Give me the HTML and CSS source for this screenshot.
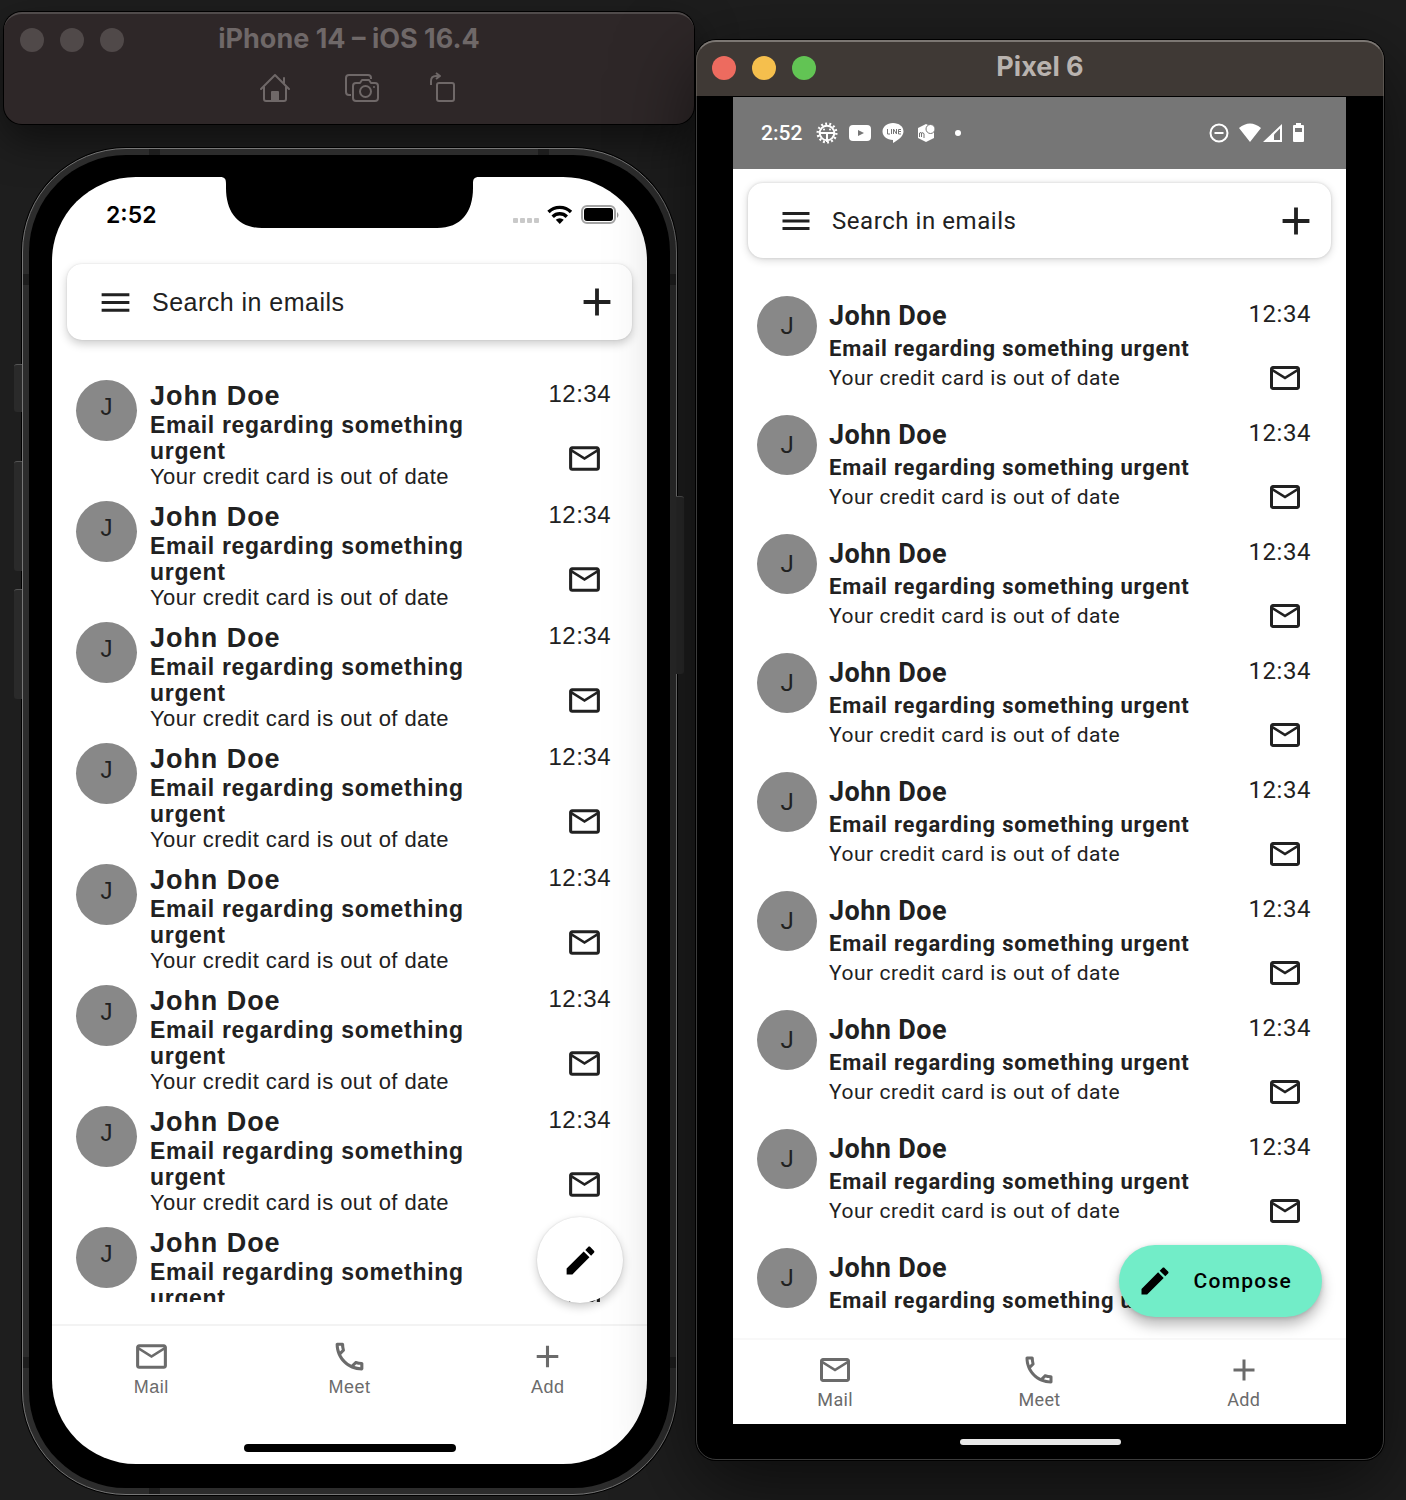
FILE: index.html
```html
<!DOCTYPE html>
<html lang="en">
<head>
<meta charset="utf-8">
<meta name="viewport" content="width=device-width, initial-scale=1">
<title>Mail on iPhone 14 and Pixel 6</title>
<link rel="stylesheet" href="styles.css">
</head>
<body>
<svg class="sprite" aria-hidden="true">
  <symbol id="menu" viewBox="0 0 24 24"><path d="M3 6h18v2H3zM3 11h18v2H3zM3 16h18v2H3z"/></symbol>
  <symbol id="plus" viewBox="0 0 24 24"><path d="M19 13h-6v6h-2v-6H5v-2h6V5h2v6h6z"/></symbol>
  <symbol id="mail" viewBox="0 0 24 24"><path d="M22 6C22 4.9 21.1 4 20 4H4C2.9 4 2 4.9 2 6V18C2 19.1 2.9 20 4 20H20C21.1 20 22 19.1 22 18V6M20 6L12 11L4 6H20M20 18H4V8L12 13L20 8V18Z"/></symbol>
  <symbol id="phone" viewBox="0 0 24 24"><path d="M20,15.5C18.8,15.5 17.5,15.3 16.4,14.9C16.3,14.9 16.2,14.9 16.1,14.9C15.8,14.9 15.6,15 15.4,15.2L13.2,17.4C10.4,15.9 8,13.6 6.6,10.8L8.8,8.6C9.1,8.3 9.2,7.9 9,7.6C8.7,6.5 8.5,5.2 8.5,4C8.5,3.5 8,3 7.5,3H4C3.5,3 3,3.5 3,4C3,13.4 10.6,21 20,21C20.5,21 21,20.5 21,20V16.5C21,16 20.5,15.5 20,15.5M5,5H6.5C6.6,5.9 6.8,6.8 7,7.6L5.8,8.8C5.4,7.6 5.1,6.3 5,5M19,19C17.7,18.9 16.4,18.6 15.2,18.2L16.4,17C17.2,17.2 18.1,17.4 19,17.4V19Z"/></symbol>
  <symbol id="pencil" viewBox="0 0 24 24"><path d="M20.71,7.04C21.1,6.65 21.1,6 20.71,5.63L18.37,3.29C18,2.9 17.35,2.9 16.96,3.29L15.12,5.12L18.87,8.87M3,17.25V21H6.75L17.81,9.93L14.06,6.18L3,17.25Z"/></symbol>
</svg>

<main class="desktop">
  <section class="simulator" aria-label="iPhone 14 simulator">
    <header class="toolbar">
      <div class="titlebar">
        <div class="lights"><i></i><i></i><i></i></div>
        <h1 class="title">iPhone 14 – iOS 16.4</h1>
      </div>
      <div class="tools">
        <button class="tool tool-home" aria-label="Home">
          <svg width="32" height="30" viewBox="0 0 32 30" fill="none" stroke="currentColor" stroke-width="2" stroke-linecap="round" stroke-linejoin="round"><path d="M2 16L16 2l14 14M5 14v12q0 2 2 2h18q2 0 2-2V14M25 10V5"/><path d="M13 28v-9h6v9z" fill="currentColor"/></svg>
        </button>
        <button class="tool tool-shot" aria-label="Screenshot">
          <svg width="36" height="30" viewBox="0 0 36 30" fill="none" stroke="currentColor" stroke-width="2" stroke-linejoin="round"><path d="M7 22H5q-3 0-3-3V5q0-3 3-3h19q3 0 3 3v1"/><path d="M12 10h4l2-3h7l2 3h4q3 0 3 3v12q0 3-3 3H12q-3 0-3-3V13q0-3 3-3z"/><circle cx="21.500" cy="18.500" r="5.500"/><circle cx="30" cy="14" r="1" fill="currentColor" stroke="none"/></svg>
        </button>
        <button class="tool tool-rotate" aria-label="Rotate">
          <svg width="28" height="32" viewBox="0 0 28 32" fill="none" stroke="currentColor" stroke-width="2" stroke-linejoin="round"><rect x="8" y="11" width="17" height="18" rx="2"/><path d="M2 13V9q0-5 5-5h3M7 1l4 3-4 3"/></svg>
        </button>
      </div>
    </header>

    <div class="iphone">
      <i class="key key-mute"></i><i class="key key-up"></i><i class="key key-down"></i><i class="key key-power"></i>
      <i class="band band-top-left"></i><i class="band band-top-right"></i><i class="band band-bottom-left"></i>
      <i class="band band-left-upper"></i><i class="band band-left-lower"></i><i class="band band-right-upper"></i><i class="band band-right-lower"></i>
      <div class="bezel">
        <div class="screen ios">
          <svg class="notch" width="259" height="52" viewBox="0 0 259 52" aria-hidden="true"><path d="M0 0C5 0 6 2 6 7v4c0 24 12 40 36 40h175c24 0 36-16 36-40V7c0-5 1-7 6-7z"/></svg>
          <div class="status">
            <span class="clock">2:52</span>
            <svg width="108" height="24" viewBox="0 0 108 24" aria-hidden="true"><g fill="#c9c9c9"><rect x="1" y="15" width="5" height="5" rx="1"/><rect x="8" y="15" width="5" height="5" rx="1"/><rect x="15" y="15" width="5" height="5" rx="1"/><rect x="22" y="15" width="5" height="5" rx="1"/></g><g fill="none" stroke="#000" stroke-width="3.400"><path d="M36.500 9a16 16 0 0 1 22.500 0"/><path d="M40.700 13.700a10 10 0 0 1 14.100 0"/></g><path d="M47.750 21l-4-4.300a6 6 0 0 1 8 0z"/><rect x="70" y="3" width="33" height="17" rx="5" fill="none" stroke="#a3a3a3" stroke-width="2"/><rect x="72" y="5" width="29" height="13" rx="3"/><path d="M105 9q3 3 0 6z" fill="#999"/></svg>
          </div>
          <form class="search">
            <button class="icon-btn" type="button" aria-label="Menu"><svg class="icon"><use href="#menu"/></svg></button>
            <input class="field" type="text" aria-label="Search in emails" placeholder="Search in emails">
            <button class="icon-btn" type="button" aria-label="New"><svg class="icon icon-plus"><use href="#plus"/></svg></button>
          </form>
          <ul class="mails">
            <li class="row"><span class="avatar">J</span><div class="text"><h2 class="name">John Doe</h2><p class="subject">Email regarding something urgent</p><p class="body">Your credit card is out of date</p></div><div class="side"><time class="time">12:34</time><svg class="icon"><use href="#mail"/></svg></div></li>
            <li class="row"><span class="avatar">J</span><div class="text"><h2 class="name">John Doe</h2><p class="subject">Email regarding something urgent</p><p class="body">Your credit card is out of date</p></div><div class="side"><time class="time">12:34</time><svg class="icon"><use href="#mail"/></svg></div></li>
            <li class="row"><span class="avatar">J</span><div class="text"><h2 class="name">John Doe</h2><p class="subject">Email regarding something urgent</p><p class="body">Your credit card is out of date</p></div><div class="side"><time class="time">12:34</time><svg class="icon"><use href="#mail"/></svg></div></li>
            <li class="row"><span class="avatar">J</span><div class="text"><h2 class="name">John Doe</h2><p class="subject">Email regarding something urgent</p><p class="body">Your credit card is out of date</p></div><div class="side"><time class="time">12:34</time><svg class="icon"><use href="#mail"/></svg></div></li>
            <li class="row"><span class="avatar">J</span><div class="text"><h2 class="name">John Doe</h2><p class="subject">Email regarding something urgent</p><p class="body">Your credit card is out of date</p></div><div class="side"><time class="time">12:34</time><svg class="icon"><use href="#mail"/></svg></div></li>
            <li class="row"><span class="avatar">J</span><div class="text"><h2 class="name">John Doe</h2><p class="subject">Email regarding something urgent</p><p class="body">Your credit card is out of date</p></div><div class="side"><time class="time">12:34</time><svg class="icon"><use href="#mail"/></svg></div></li>
            <li class="row"><span class="avatar">J</span><div class="text"><h2 class="name">John Doe</h2><p class="subject">Email regarding something urgent</p><p class="body">Your credit card is out of date</p></div><div class="side"><time class="time">12:34</time><svg class="icon"><use href="#mail"/></svg></div></li>
            <li class="row"><span class="avatar">J</span><div class="text"><h2 class="name">John Doe</h2><p class="subject">Email regarding something urgent</p></div><div class="side"><time class="time">12:34</time><svg class="icon"><use href="#mail"/></svg></div></li>
          </ul>
          <button class="fab fab-round" aria-label="Compose"><svg class="icon"><use href="#pencil"/></svg></button>
          <nav class="tabs">
            <a class="tab" href="#mail"><svg class="icon"><use href="#mail"/></svg>Mail</a>
            <a class="tab" href="#meet"><svg class="icon"><use href="#phone"/></svg>Meet</a>
            <a class="tab" href="#add"><svg class="icon"><use href="#plus"/></svg>Add</a>
          </nav>
          <div class="home-bar"></div>
        </div>
      </div>
    </div>
  </section>

  <section class="emulator" aria-label="Pixel 6 emulator">
    <header class="titlebar titlebar-active">
      <div class="lights"><i class="red"></i><i class="yellow"></i><i class="green"></i></div>
      <h1 class="title">Pixel 6</h1>
    </header>
    <div class="screen android">
      <div class="status">
        <span class="clock">2:52</span>
        <svg class="notices" width="150" height="24" viewBox="0 0 150 24" fill="#fff" aria-hidden="true"><circle cx="12" cy="12" r="9.300" fill="none" stroke="#fff" stroke-width="2.400" stroke-dasharray="1.900 2.270"/><circle cx="12" cy="12" r="7.300" fill="none" stroke="#fff" stroke-width="2"/><path d="M4 11h16v2H4zM11 12h2v9h-2z"/><circle cx="9" cy="8.500" r="1"/><circle cx="15" cy="8.500" r="1"/><path fill-rule="evenodd" d="M38 4h14q4 0 4 4v8q0 4-4 4H38q-4 0-4-4V8q0-4 4-4zm5 5v6l6-3z"/><path d="M78 2c6 0 10.500 3.500 10.500 8.500 0 5-6 9-10.500 11.500v-3c-6 0-10.500-4-10.500-8.500S72 2 78 2z"/><g fill="none" stroke="#767676"><path d="M72.500 8v5h2.500M76.500 8v5M78.500 13V8l3 5V8M86 8.500h-2.500v4.500H86M83.500 10.500H86"/></g><path d="M103 7l8-4 8 4v10l-8 4-8-4z"/><circle cx="115.500" cy="8" r="4.500" stroke="#767676"/><path d="M104.500 16v-4q2-1 2 0v4m0-4q2-1 2.500 1v4" fill="none" stroke="#767676"/><circle cx="143" cy="12" r="3"/></svg>
        <svg class="signals" width="100" height="24" viewBox="0 0 100 24" fill="#fff" aria-hidden="true"><circle cx="12" cy="12" r="8.500" fill="none" stroke="#fff" stroke-width="2"/><path d="M7.500 11h9v2h-9zM32 7q11-9 22 0L43 21zM56 21L75 3v18z"/><path d="M67 13.500l6-6V19h-6z" fill="#767676"/><path fill-rule="evenodd" d="M87 4h2V2h5v2h2q1 0 1 1v15q0 1-1 1h-9q-1 0-1-1V5q0-1 1-1zm1 3v4h7V7z"/></svg>
      </div>
      <form class="search">
        <button class="icon-btn" type="button" aria-label="Menu"><svg class="icon"><use href="#menu"/></svg></button>
        <input class="field" type="text" aria-label="Search in emails" placeholder="Search in emails">
        <button class="icon-btn" type="button" aria-label="New"><svg class="icon icon-plus"><use href="#plus"/></svg></button>
      </form>
      <ul class="mails">
        <li class="row"><span class="avatar">J</span><div class="text"><h2 class="name">John Doe</h2><p class="subject">Email regarding something urgent</p><p class="body">Your credit card is out of date</p></div><div class="side"><time class="time">12:34</time><svg class="icon"><use href="#mail"/></svg></div></li>
        <li class="row"><span class="avatar">J</span><div class="text"><h2 class="name">John Doe</h2><p class="subject">Email regarding something urgent</p><p class="body">Your credit card is out of date</p></div><div class="side"><time class="time">12:34</time><svg class="icon"><use href="#mail"/></svg></div></li>
        <li class="row"><span class="avatar">J</span><div class="text"><h2 class="name">John Doe</h2><p class="subject">Email regarding something urgent</p><p class="body">Your credit card is out of date</p></div><div class="side"><time class="time">12:34</time><svg class="icon"><use href="#mail"/></svg></div></li>
        <li class="row"><span class="avatar">J</span><div class="text"><h2 class="name">John Doe</h2><p class="subject">Email regarding something urgent</p><p class="body">Your credit card is out of date</p></div><div class="side"><time class="time">12:34</time><svg class="icon"><use href="#mail"/></svg></div></li>
        <li class="row"><span class="avatar">J</span><div class="text"><h2 class="name">John Doe</h2><p class="subject">Email regarding something urgent</p><p class="body">Your credit card is out of date</p></div><div class="side"><time class="time">12:34</time><svg class="icon"><use href="#mail"/></svg></div></li>
        <li class="row"><span class="avatar">J</span><div class="text"><h2 class="name">John Doe</h2><p class="subject">Email regarding something urgent</p><p class="body">Your credit card is out of date</p></div><div class="side"><time class="time">12:34</time><svg class="icon"><use href="#mail"/></svg></div></li>
        <li class="row"><span class="avatar">J</span><div class="text"><h2 class="name">John Doe</h2><p class="subject">Email regarding something urgent</p><p class="body">Your credit card is out of date</p></div><div class="side"><time class="time">12:34</time><svg class="icon"><use href="#mail"/></svg></div></li>
        <li class="row"><span class="avatar">J</span><div class="text"><h2 class="name">John Doe</h2><p class="subject">Email regarding something urgent</p><p class="body">Your credit card is out of date</p></div><div class="side"><time class="time">12:34</time><svg class="icon"><use href="#mail"/></svg></div></li>
        <li class="row"><span class="avatar">J</span><div class="text"><h2 class="name">John Doe</h2><p class="subject">Email regarding something urgent</p></div></li>
      </ul>
      <button class="fab fab-wide"><svg class="icon"><use href="#pencil"/></svg>Compose</button>
      <nav class="tabs">
        <a class="tab" href="#mail"><svg class="icon"><use href="#mail"/></svg>Mail</a>
        <a class="tab" href="#meet"><svg class="icon"><use href="#phone"/></svg>Meet</a>
        <a class="tab" href="#add"><svg class="icon"><use href="#plus"/></svg>Add</a>
      </nav>
    </div>
    <div class="gesture"><i class="pill"></i></div>
  </section>
</main>
</body>
</html>
```
FILE: styles.css
```css
* { box-sizing: border-box; margin: 0; padding: 0; }

body { background: #1e1e1e; }

button { border: 0; background: none; font: inherit; color: inherit; }

.sprite { display: none; }

svg { display: block; flex: none; }

.icon { width: 36px; height: 36px; fill: currentColor; }
.icon-plus { width: 46px; height: 46px; }
.ios .icon:not(.icon-plus) { width: 37px; height: 37px; }

.desktop {
  display: grid;
  grid-template-columns: minmax(0, 690fr) minmax(0, 688fr);
  gap: 2px;
  min-height: 100vh;
  padding: 12px 22px 5px 4px;
  overflow: hidden;
}

/* Window chrome */
.simulator { display: flex; flex-direction: column; gap: 24px; }

.toolbar {
  height: 112px;
  border-radius: 18px;
  background: #2e2728;
  border-top: 2px solid #504b4b;
  box-shadow: 0 0 0 1px #000, 0 16px 40px rgba(0, 0, 0, .5);
  color: #6f6868;
}

.titlebar {
  display: grid;
  grid-template-columns: 1fr auto 1fr;
  align-items: center;
  height: 52px;
  padding: 0 16px;
}

.title {
  padding-bottom: 2px;
  font: 700 27px/32px Inter, "Liberation Sans", sans-serif;
  text-align: center;
}

.lights { display: flex; gap: 16px; }
.lights i { width: 24px; height: 24px; border-radius: 50%; background: #504949; }
.lights .red { background: #ed6b5f; }
.lights .yellow { background: #f5bf4d; }
.lights .green { background: #62c454; }

.tools {
  display: flex;
  justify-content: center;
  align-items: center;
  gap: 49px;
  height: 44px;
  padding-left: 14px;
}
.tool { display: grid; place-items: center; height: 32px; }
.tool-home { width: 40px; }
.tool-shot { width: 36px; }
.tool-rotate { width: 28px; }

.emulator {
  position: relative;
  display: flex;
  flex-direction: column;
  margin: 28px 0 35px;
  border: 1px solid #3c3c3c;
  border-radius: 20px;
  background: #000;
  box-shadow: 0 0 0 1px #000, 0 24px 80px rgba(0, 0, 0, .6);
}

.titlebar-active {
  height: 56px;
  margin: -1px -1px 1px;
  padding: 0 15px 2px;
  border: 1px solid #5b5651;
  border-top: 2px solid #7c7773;
  border-bottom: 0;
  border-radius: 20px 20px 0 0;
  background: #3f3935;
  color: #b9b3af;
}

/* iPhone body */
.iphone {
  position: relative;
  display: flex;
  flex: 1;
  margin: 0 17px 0 18px;
  padding: 6px;
  border: 1px solid #777;
  border-radius: 104px;
  background: #2c2c2c;
  box-shadow: 0 0 0 1px #000;
}

.bezel {
  display: flex;
  flex: 1;
  min-width: 0;
  padding: 22px 23px 24px;
  border-radius: 97px;
  background: #000;
}

.key {
  position: absolute;
  width: 8px;
  border-top: 1px solid #555;
  background: #2a2a2a;
}
.key-mute, .key-up, .key-down { left: -9px; border-radius: 3px 0 0 3px; }
.key-mute { top: 215px; height: 48px; }
.key-up { top: 312px; height: 110px; }
.key-down { top: 440px; height: 110px; }
.key-power { right: -8px; top: 347px; height: 178px; border-radius: 0 3px 3px 0; }

.band { position: absolute; background: #1d1d1d; }
.band-top-left, .band-top-right, .band-bottom-left { width: 11px; height: 6px; }
.band-top-left { top: 0; left: 126px; }
.band-top-right { top: 0; right: 127px; }
.band-bottom-left { bottom: 0; left: 126px; }
.band-left-upper, .band-left-lower, .band-right-upper, .band-right-lower { width: 6px; height: 11px; }
.band-left-upper { left: 0; top: 125px; }
.band-left-lower { left: 0; bottom: 126px; }
.band-right-upper { right: 0; top: 125px; }
.band-right-lower { right: 0; bottom: 126px; }

/* App screen */
.screen {
  position: relative;
  display: flex;
  flex: 1;
  flex-direction: column;
  min-width: 0;
  background: #fff;
  color: #212121;
}

.ios {
  border-radius: 84px;
  overflow: hidden;
  font-family: "Liberation Sans", Arial, sans-serif;
  letter-spacing: .03em;
}

.android {
  margin: 0 37px 0 36px;
  font-family: Roboto, sans-serif;
  letter-spacing: .035em;
}

.notch { position: absolute; top: 0; left: 50%; margin-left: -130px; }

.status { display: flex; justify-content: space-between; align-items: center; letter-spacing: 0; }

.ios .status { height: 87px; padding: 0 27px 12px 54px; color: #000; }
.ios .clock { font: 600 23px/28px Inter, sans-serif; }

.android .status { height: 72px; padding: 0 39px 0 28px; background: #767676; color: #fff; }
.android .clock { font-weight: 500; font-size: 21px; line-height: 28px; }
.notices { margin: 0 auto 0 13px; }

.search {
  display: flex;
  align-items: center;
  gap: 18px;
  height: 76px;
  margin: 0 15px;
  padding: 0 12px 0 30px;
  border-radius: 15px;
  background: #fff;
  box-shadow: 0 4px 10px rgba(0, 0, 0, .2), 0 0 2px rgba(0, 0, 0, .12);
}
.android .search { height: 75px; margin-top: 14px; box-shadow: 0 2px 8px rgba(0, 0, 0, .16), 0 0 3px rgba(0, 0, 0, .14); }

.field {
  flex: 1;
  min-width: 0;
  height: 32px;
  border: 0;
  outline: 0;
  background: none;
  color: inherit;
  font: inherit;
  font-size: 24px;
  letter-spacing: inherit;
}
.ios .field { font-size: 25px; }
.field::placeholder { color: inherit; opacity: 1; }

.mails {
  flex: 1 1 0;
  min-height: 600px;
  margin: 40px 0 22px;
  overflow: hidden;
  list-style: none;
}
.android .mails { margin-top: 38px; }

.row { display: flex; padding: 0 36px 0 24px; }
.ios .row { height: 121px; }
.android .row { height: 119px; padding-right: 35px; }

.avatar {
  display: grid;
  flex: none;
  place-items: center;
  width: 60px;
  height: 60px;
  border-radius: 50%;
  background: #888;
  font-size: 24px;
  line-height: 28px;
  letter-spacing: 0;
}
.ios .avatar { width: 61px; height: 61px; padding-bottom: 8px; }

.text { flex: 1; min-width: 0; padding: 1px 28px 0 13px; }
.android .text { padding: 4px 0 0 12px; }

.name { font-size: 27px; line-height: 31px; letter-spacing: .035em; }
.subject { font-size: 23px; line-height: 26px; font-weight: 700; letter-spacing: .03em; }
.body { font-size: 22px; line-height: 26px; letter-spacing: .02em; }
.android .name { line-height: 33px; letter-spacing: .015em; }
.android .subject { font-size: 22px; line-height: 31px; letter-spacing: .035em; }
.android .body { font-size: 21px; line-height: 28px; letter-spacing: .025em; }

.side { display: flex; flex: none; flex-direction: column; align-items: flex-end; gap: 32px; }
.side .icon { margin-right: 8px; }
.android .side { gap: 30px; padding-top: 2px; }
.time { font-size: 24px; line-height: 28px; }
.android .time { line-height: 32px; }

.fab { position: absolute; right: 24px; display: flex; align-items: center; color: #000; }
.fab-round {
  bottom: 161px;
  justify-content: center;
  width: 86px;
  height: 86px;
  border-radius: 50%;
  background: #fff;
  box-shadow: 0 4px 10px rgba(0, 0, 0, .2), 0 0 2px rgba(0, 0, 0, .14);
}
.fab-wide {
  bottom: 107px;
  gap: 20px;
  height: 72px;
  padding: 0 30px 0 18px;
  border-radius: 36px;
  background: #72edc8;
  box-shadow: 0 8px 14px rgba(0, 0, 0, .28), 0 1px 4px rgba(0, 0, 0, .14);
  font-weight: 500;
  font-size: 21px;
  letter-spacing: .06em;
}

.tabs {
  display: grid;
  grid-template-columns: repeat(3, 1fr);
  height: 86px;
  padding-top: 12px;
  border-top: 2px solid #f3f3f3;
}
.android .tabs { border-top-color: #f8f8f8; }
.tab {
  display: flex;
  flex-direction: column;
  align-items: center;
  color: #6b6b6b;
  font-size: 18px;
  line-height: 24px;
  text-decoration: none;
}
.android .tab { letter-spacing: .02em; }

.home-bar { width: 212px; height: 8px; margin: 34px auto 12px; border-radius: 4px; background: #000; }

.gesture { display: grid; place-items: center; height: 35px; }
.pill { width: 161px; height: 6px; border-radius: 3px; background: #e8e8e8; }
```
